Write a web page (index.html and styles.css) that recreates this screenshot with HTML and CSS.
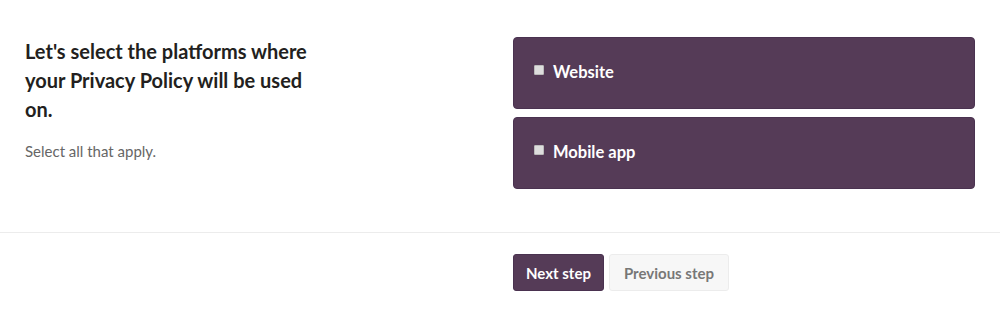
FILE: index.html
```html
<!DOCTYPE html>
<html lang="en">
<head>
  <meta charset="UTF-8" />
  <meta name="viewport" content="width=device-width, initial-scale=1.0"/>
  <title>Privacy Policy Generator</title>
  <link rel="stylesheet" href="styles.css">
</head>
<body>
  <div class="step">
    <div class="intro">
      <h2>Let's select the platforms where your Privacy Policy will be used on.</h2>
      <p class="hint">Select all that apply.</p>
    </div>

    <div class="options">
      <label class="option">
        <input type="checkbox" name="platform" value="website" />
        <span>Website</span>
      </label>
      <label class="option">
        <input type="checkbox" name="platform" value="app" />
        <span>Mobile app</span>
      </label>
    </div>
  </div>

  <div class="actions">
    <div class="spacer"></div>
    <div class="buttons">
      <button class="btn btn-next">Next step</button>
      <button class="btn btn-prev">Previous step</button>
    </div>
  </div>
</body>
</html>
```

FILE: styles.css
```css
body {
  margin: 0;
  font-family: Lato, "Open Sans", Arial, sans-serif;
  background: #fff;
  color: #222;
}

.step {
  display: grid;
  grid-template-columns: 1fr 462px;
  column-gap: 25px;
  padding: 37px 25px 43px;
}

.intro h2 {
  max-width: 300px;
  margin: 0;
  font-size: 20px;
  font-weight: 700;
  line-height: 29px;
  color: #231f20;
}

.hint {
  margin: 18px 0 0;
  font-size: 15px;
  color: #666;
}

.options {
  display: flex;
  flex-direction: column;
  gap: 8px;
}

.option {
  box-sizing: border-box;
  display: flex;
  align-items: center;
  height: 72px;
  padding: 0 20px 2px;
  background: #553b57;
  border: 1px solid #4a3250;
  border-radius: 4px;
  color: #fff;
  font-size: 16.5px;
  font-weight: 700;
  cursor: pointer;
}

.option input {
  width: 10px;
  height: 10px;
  margin: -4px 9px 0 0;
  appearance: none;
  background: #ddd;
  border: 1px solid #bbb;
  border-radius: 1px;
}

.actions {
  display: grid;
  grid-template-columns: 1fr 462px;
  column-gap: 25px;
  padding: 21px 25px 0;
  border-top: 1px solid #ececec;
}

.buttons {
  display: flex;
  gap: 5px;
}

.btn {
  height: 37px;
  padding: 0 14px;
  font-family: inherit;
  font-size: 15px;
  font-weight: 700;
  border-radius: 3px;
  cursor: pointer;
}

.btn-next {
  padding: 0 12px;
  background: #553b57;
  border: 1px solid #4a3250;
  color: #fff;
}

.btn-prev {
  background: #f7f7f7;
  border: 1px solid #ececec;
  color: #777;
}
```
